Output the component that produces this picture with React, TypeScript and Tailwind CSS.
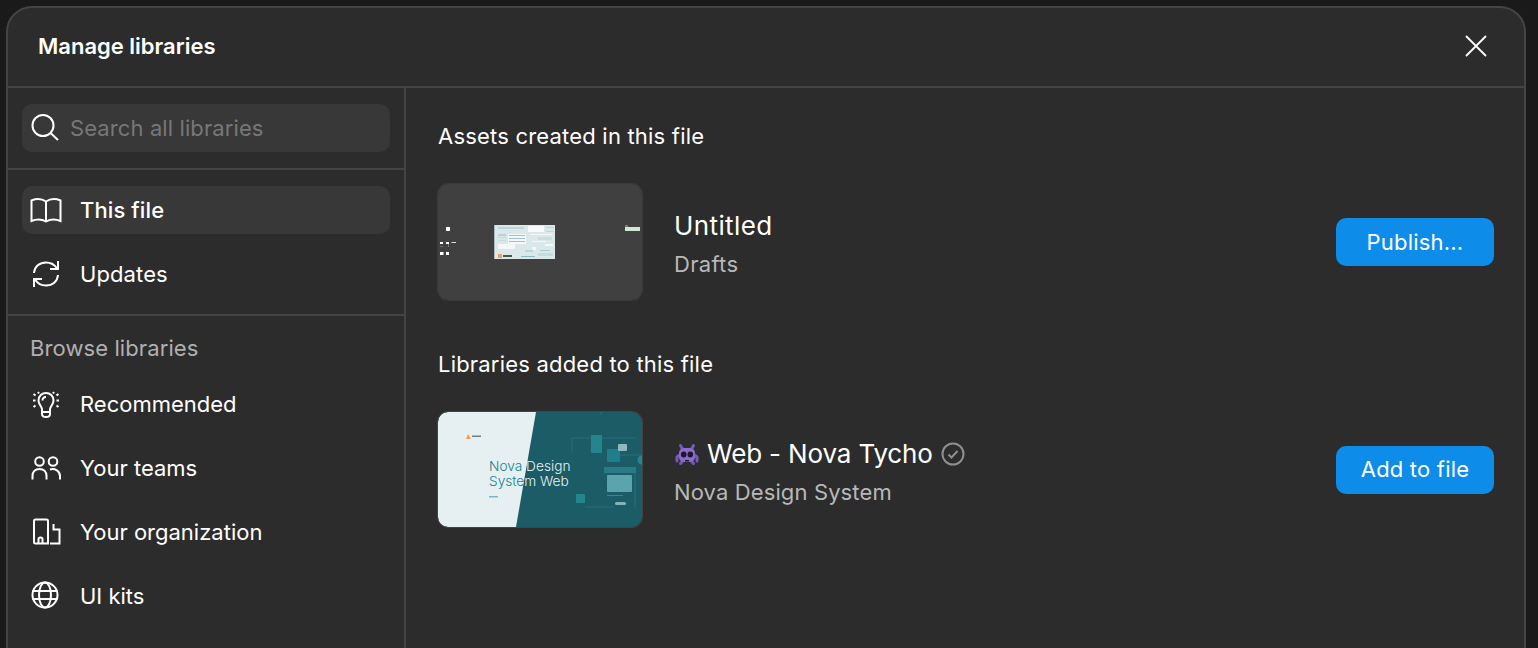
const icon = "fill-none stroke-white";

function SearchIcon() {
  return (
    <svg width="32" height="32" viewBox="0 0 32 32" className={icon} strokeWidth="2">
      <circle cx="13" cy="13.500" r="10.500" />
      <path d="M20.500 21L28 28" />
    </svg>
  );
}

function BookIcon() {
  return (
    <svg width="32" height="32" viewBox="0 0 32 32" className={icon} strokeWidth="2">
      <path d="M1.500 27V6.500C6.500 4.500 11.500 4.500 16 7.500C20.500 4.500 25.500 4.500 30.500 6.500V27C25.500 25 20.500 25 16 27.500C11.500 25 6.500 25 1.500 27Z" />
      <path d="M16 7.500V27.500" />
    </svg>
  );
}

function SyncIcon() {
  return (
    <svg width="32" height="32" viewBox="0 0 32 32" className={icon} strokeWidth="2">
      <path d="M4 15C4.500 8.500 9.500 4.500 16 4.500C20.500 4.500 24.500 6.500 27 10.500" />
      <path d="M28 3V11H20" />
      <path d="M28 17C27.500 23.500 22.500 27.500 16 27.500C11.500 27.500 7.500 25.500 5 21.500" />
      <path d="M4 29V21H12" />
    </svg>
  );
}

function BulbIcon() {
  return (
    <svg width="32" height="32" viewBox="0 0 32 32" className={icon} strokeWidth="2">
      <path d="M16 5C12 5 8.500 8 8.500 12.500C8.500 16 11 17.500 12 21V26C12 28 14 29 16 29C18 29 20 28 20 26V21C21 17.500 23.500 16 23.500 12.500C23.500 8 20 5 16 5Z" />
      <path d="M12 24H20" />
      <path d="M16 9C14 9 12.500 10.500 12.500 12.500" />
      <path d="M3.500 6L5.500 7.500M3 12.500H5.500M3.500 19L5.500 17.500M28.500 6L26.500 7.500M29 12.500H26.500M28.500 19L26.500 17.500M8 4L9 5.500M24 4L23 5.500" />
    </svg>
  );
}

function TeamsIcon() {
  return (
    <svg width="32" height="32" viewBox="0 0 32 32" className={icon} strokeWidth="2">
      <circle cx="9.500" cy="9.500" r="4.300" />
      <circle cx="23" cy="9.500" r="4.300" />
      <path d="M2.500 27.500V24C2.500 19.500 5.500 17 9.500 17C13.500 17 16.500 19.500 16.500 24V27.500" />
      <path d="M20 17.500C25 16 30 19 30 24V27.500" />
    </svg>
  );
}

function OrgIcon() {
  return (
    <svg width="32" height="32" viewBox="0 0 32 32" className={icon} strokeWidth="2">
      <path d="M5.500 3.500H16.500C17.200 3.500 18 4 18 5V27.500H5.500C4.700 27.500 4 27 4 26V5C4 4 4.700 3.500 5.500 3.500Z" />
      <path d="M8.500 27.500V23C8.500 22 9.300 21.500 10.500 21.500C11.700 21.500 12.500 22 12.500 23V27.500" />
      <path d="M23.500 8V13.500H29.500V27.500H20" />
    </svg>
  );
}

function GlobeIcon() {
  return (
    <svg width="32" height="32" viewBox="0 0 32 32" className={icon} strokeWidth="2">
      <circle cx="15" cy="15" r="12.500" />
      <ellipse cx="15" cy="15" rx="6" ry="12.500" />
      <path d="M2.500 11H27.500M2.500 19H27.500" />
    </svg>
  );
}

function VerifiedIcon() {
  return (
    <svg width="24" height="24" viewBox="0 0 24 24" className="ml-[1px] fill-none stroke-[#8f8f8f]" strokeWidth="2">
      <circle cx="12" cy="12" r="10.500" />
      <path d="M7.500 12.500L10.500 15.500L16.500 9" />
    </svg>
  );
}

function InvaderEmoji() {
  return (
    <svg width="26" height="24" viewBox="0 0 26 24">
      <g fill="none" stroke="#7558b8" strokeWidth="3" strokeLinecap="round" strokeLinejoin="round">
        <path d="M9 8L6.500 3.500M17 8L19.500 3.500" />
        <path d="M7 12L3 15V19M19 12L23 15V19" />
        <path d="M9.500 18L6.500 21.500M16.500 18L19.500 21.500" />
      </g>
      <rect x="5" y="6" width="16" height="14" rx="5" fill="#8a6ccc" />
      <ellipse cx="9.700" cy="12.500" rx="2.800" ry="3" fill="#1e1730" />
      <ellipse cx="16.300" cy="12.500" rx="2.800" ry="3" fill="#1e1730" />
      <rect x="11" y="18" width="4" height="1.500" fill="#1e1730" />
    </svg>
  );
}

function DraftThumb() {
  return (
    <svg width="204" height="116" viewBox="0 0 204 116" className="block">
      <rect x="8" y="43" width="4" height="4" fill="#fff" />
      <rect x="2" y="58" width="3" height="2" fill="#fff" />
      <rect x="8" y="58" width="3" height="2" fill="#fff" />
      <rect x="13.500" y="58" width="4.500" height="1" fill="#ddd" />
      <rect x="2" y="68" width="3.500" height="3" fill="#fff" />
      <rect x="8" y="68" width="3" height="3" fill="#fff" />
      <rect x="2" y="62" width="3" height="0.700" fill="#777" />
      <rect x="10" y="60" width="1" height="3" fill="#777" />
      <rect x="187" y="43" width="15" height="4" fill="#cfe8d8" />
      <rect x="187" y="41" width="3" height="2" fill="#6f7f70" />
      <rect x="56" y="41" width="61" height="34" fill="#dbe8ea" />
      <rect x="56" y="41" width="1" height="34" fill="#a9bcc0" />
      <rect x="90" y="42" width="16" height="6" fill="#f8fbfb" />
      <rect x="60" y="43" width="26" height="2" fill="#bcd6da" />
      <rect x="108" y="43" width="8" height="1" fill="#bcd6da" />
      <rect x="108" y="47" width="8" height="1" fill="#bcd6da" />
      <rect x="70" y="50" width="18" height="10" fill="#f4f8f8" />
      <rect x="71" y="51" width="16" height="1" fill="#9fc0c6" />
      <rect x="71" y="54" width="16" height="1" fill="#9fc0c6" />
      <rect x="71" y="57" width="16" height="1" fill="#9fc0c6" />
      <rect x="60" y="50" width="8" height="2" fill="#b8d2d6" />
      <rect x="60" y="53" width="8" height="1" fill="#c6dde0" />
      <rect x="60" y="56" width="8" height="1" fill="#c6dde0" />
      <rect x="92" y="50" width="22" height="1" fill="#f4f8f8" />
      <rect x="100" y="53" width="14" height="3" fill="#c8dee1" />
      <rect x="94" y="57" width="14" height="1" fill="#f4f8f8" />
      <rect x="60" y="60" width="17" height="5" fill="#f4f8f8" />
      <rect x="107" y="60" width="8" height="2" fill="#f4f8f8" />
      <rect x="94" y="63" width="4" height="3" fill="#f4f8f8" />
      <rect x="87" y="66" width="8" height="2" fill="#bcd6da" />
      <rect x="102" y="66" width="10" height="1" fill="#a9c9ce" />
      <rect x="100" y="69" width="15" height="3" fill="#c4dcdf" />
      <rect x="60" y="70" width="4" height="4" fill="#e8a468" />
      <rect x="65" y="71" width="9" height="2" fill="#4a5557" />
      <rect x="83" y="72" width="14" height="1" fill="#8fb8c0" />
    </svg>
  );
}

function NovaThumb() {
  return (
    <svg width="204" height="115" viewBox="0 0 204 115" className="block">
      <rect width="204" height="115" fill="#1b5c66" />
      <path d="M0 0H98L78 115H0Z" fill="#e6f0f2" />
      <path d="M28 27L30 22L33 27Z" fill="#f0a050" />
      <rect x="34" y="23.500" width="9" height="1.500" fill="#6c8186" />
      <text x="51" y="59" fontFamily="Inter, sans-serif" fontWeight="300" fontSize="13.700">
        <tspan fill="#14808f">Nova </tspan>
        <tspan fill="#e6f4f5">Design</tspan>
      </text>
      <text x="51" y="74" fontFamily="Inter, sans-serif" fontWeight="300" fontSize="13.700">
        <tspan fill="#14808f">Syste</tspan>
        <tspan fill="#e6f4f5">m Web</tspan>
      </text>
      <rect x="51" y="84" width="9" height="1.500" fill="#7fb6c0" />
      <path d="M134 41V26H198M182 43H204M197 61V96M163 0V3M147 95H176" stroke="#2b7a85" fill="none" strokeWidth="0.700" />
      <rect x="153" y="23" width="11" height="18" rx="1" fill="#24858f" />
      <rect x="169" y="37" width="13" height="13" rx="1" fill="#1e7f8c" />
      <rect x="180" y="32" width="9" height="7" rx="1" fill="#8fb9bf" />
      <circle cx="204" cy="48" r="4.500" fill="#24858f" />
      <rect x="166" y="55" width="32" height="6" fill="#2a7a86" />
      <rect x="169" y="63" width="25" height="17" rx="1" fill="#5ba3ad" />
      <rect x="169" y="83" width="16" height="0.800" fill="#3f8f99" />
      <rect x="177" y="90" width="11" height="3" rx="1.500" fill="#7fb3ba" />
      <rect x="138" y="82" width="9" height="9" fill="#24858f" />
    </svg>
  );
}

const browse = [
  { label: "Recommended", Icon: BulbIcon },
  { label: "Your teams", Icon: TeamsIcon },
  { label: "Your organization", Icon: OrgIcon },
  { label: "UI kits", Icon: GlobeIcon },
];

export default function App() {
  return (
    <div
      className="h-[648px] overflow-hidden bg-[#1a1a1a] pt-[6px] pl-[6px] pr-[12px] text-[22px] text-white"
      style={{ fontFamily: "Inter, sans-serif" }}
    >
      <div className="h-[700px] rounded-[26px] border-2 border-[#444444] bg-[#2c2c2c]">
        <div className="flex h-[78px] items-center justify-between pb-[2px] pl-[30px] pr-[36px]">
          <h1 className="font-semibold">Manage libraries</h1>
          <svg width="24" height="24" viewBox="0 0 24 24" className={icon} strokeWidth="1.800">
            <path d="M2 2L22 22M22 2L2 22" />
          </svg>
        </div>
        <div className="flex h-[600px] border-t-2 border-[#444444]">
          <aside className="w-[398px] shrink-0 border-r-2 border-[#444444]">
            <div className="border-b-2 border-[#444444] px-[14px] py-[16px]">
              <div className="flex h-[48px] w-[368px] items-center gap-[8px] rounded-[10px] bg-[#383838] pl-[8px]">
                <SearchIcon />
                <span className="tracking-[0.1px] text-[#777777]">Search all libraries</span>
              </div>
            </div>
            <nav className="flex flex-col gap-[16px] border-b-2 border-[#444444] px-[14px] py-[16px]">
              <div className="flex h-[48px] w-[368px] items-center gap-[18px] rounded-[10px] bg-[#383838] pl-[8px] font-medium tracking-[0.1px]">
                <BookIcon />
                This file
              </div>
              <div className="flex h-[48px] w-[368px] items-center gap-[18px] pl-[8px] tracking-[0.1px]">
                <SyncIcon />
                Updates
              </div>
            </nav>
            <div className="px-[14px] pt-[16px]">
              <div className="flex h-[32px] items-center pl-[8px] tracking-[0.1px] text-[#b0b0b0]">Browse libraries</div>
              <div className="mt-[16px] flex flex-col gap-[16px]">
                {browse.map(({ label, Icon }) => (
                  <div key={label} className="flex h-[48px] items-center gap-[18px] pl-[8px]">
                    <Icon />
                    {label}
                  </div>
                ))}
              </div>
            </div>
          </aside>
          <main className="flex-1 pl-[32px] pr-[30px] pt-[32px]">
            <h2 className="flex h-[32px] items-center tracking-[0.2px]">Assets created in this file</h2>
            <div className="mt-[32px] flex items-center">
              <div className="h-[116px] w-[204px] overflow-hidden rounded-[10px] bg-[#404040] outline-1 outline-[#3a3a3a]">
                <DraftThumb />
              </div>
              <div className="ml-[32px] flex-1 pt-[4px]">
                <div className="text-[26px] leading-[40px] tracking-[0.4px]">Untitled</div>
                <div className="leading-[36px] tracking-[0.3px] text-[#b8b8b8]">Drafts</div>
              </div>
              <button className="h-[48px] w-[158px] rounded-[10px] bg-[#0d8ce9] tracking-[0.2px]">Publish...</button>
            </div>
            <h2 className="mt-[48px] flex h-[32px] items-center tracking-[0.2px]">Libraries added to this file</h2>
            <div className="mt-[32px] flex items-center">
              <div className="h-[115px] w-[204px] overflow-hidden rounded-[10px] outline-1 outline-[#444444]">
                <NovaThumb />
              </div>
              <div className="ml-[32px] flex-1 pt-[4px]">
                <div className="flex h-[40px] items-center gap-[7px] text-[26px] tracking-[-0.15px]">
                  <InvaderEmoji />
                  Web - Nova Tycho
                  <VerifiedIcon />
                </div>
                <div className="leading-[36px] tracking-[0.12px] text-[#b8b8b8]">Nova Design System</div>
              </div>
              <button className="h-[48px] w-[158px] rounded-[10px] bg-[#0d8ce9] tracking-[0.2px]">Add to file</button>
            </div>
          </main>
        </div>
      </div>
    </div>
  );
}
